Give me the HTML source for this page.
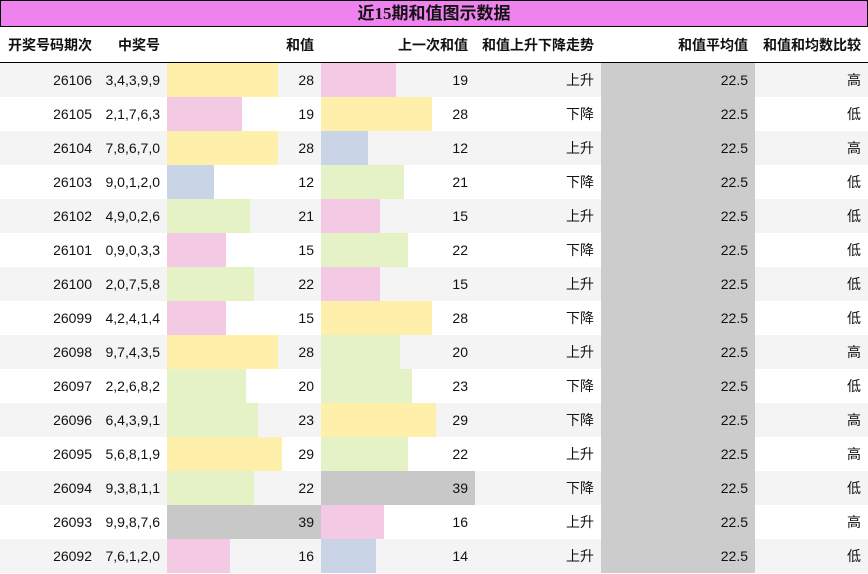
<!DOCTYPE html><html><head><meta charset="utf-8"><style>
body{margin:0;width:868px;height:574px;overflow:hidden;background:#fff;font-family:"Liberation Sans","Noto Sans CJK SC",sans-serif;font-size:14px;color:#111}
.t{height:25px;background:#ee82ee;border:1px solid #000;text-align:center;font:bold 17px/25px "Liberation Serif","Noto Sans CJK SC",serif}
.r{display:flex;height:34px;line-height:34px}
.h{font-weight:bold;height:35px;line-height:37px;border-bottom:1px solid #000}
.r>div{position:relative;text-align:right;padding-right:7px;box-sizing:border-box}
.c1{width:99px}.c2{width:68px}.c3{width:154px}.c4{width:154px}.c5{width:126px}.c6{width:154px}.c7{width:113px}
.r:nth-child(odd) {background:#f4f4f4}
.b{position:absolute;left:0;top:0;height:34px}
.r span{position:relative}
.g6{background:#ccc}
.Y{background:#fef0aa}.P{background:#f3c9e3}.G{background:#e4f2c6}.B{background:#c9d4e6}.X{background:#c8c8c8}
</style></head><body>
<div class="t">近15期和值图示数据</div>
<div class="r h" style="background:#fff"><div class="c1">开奖号码期次</div><div class="c2">中奖号</div><div class="c3">和值</div><div class="c4">上一次和值</div><div class="c5">和值上升下降走势</div><div class="c6">和值平均值</div><div class="c7">和值和均数比较</div></div>
<div id="rows">
<div class="r"><div class="c1">26106</div><div class="c2">3,4,3,9,9</div><div class="c3"><div class="b Y" style="width:111px"></div><span>28</span></div><div class="c4"><div class="b P" style="width:75px"></div><span>19</span></div><div class="c5">上升</div><div class="c6 g6">22.5</div><div class="c7">高</div></div>
<div class="r"><div class="c1">26105</div><div class="c2">2,1,7,6,3</div><div class="c3"><div class="b P" style="width:75px"></div><span>19</span></div><div class="c4"><div class="b Y" style="width:111px"></div><span>28</span></div><div class="c5">下降</div><div class="c6 g6">22.5</div><div class="c7">低</div></div>
<div class="r"><div class="c1">26104</div><div class="c2">7,8,6,7,0</div><div class="c3"><div class="b Y" style="width:111px"></div><span>28</span></div><div class="c4"><div class="b B" style="width:47px"></div><span>12</span></div><div class="c5">上升</div><div class="c6 g6">22.5</div><div class="c7">高</div></div>
<div class="r"><div class="c1">26103</div><div class="c2">9,0,1,2,0</div><div class="c3"><div class="b B" style="width:47px"></div><span>12</span></div><div class="c4"><div class="b G" style="width:83px"></div><span>21</span></div><div class="c5">下降</div><div class="c6 g6">22.5</div><div class="c7">低</div></div>
<div class="r"><div class="c1">26102</div><div class="c2">4,9,0,2,6</div><div class="c3"><div class="b G" style="width:83px"></div><span>21</span></div><div class="c4"><div class="b P" style="width:59px"></div><span>15</span></div><div class="c5">上升</div><div class="c6 g6">22.5</div><div class="c7">低</div></div>
<div class="r"><div class="c1">26101</div><div class="c2">0,9,0,3,3</div><div class="c3"><div class="b P" style="width:59px"></div><span>15</span></div><div class="c4"><div class="b G" style="width:87px"></div><span>22</span></div><div class="c5">下降</div><div class="c6 g6">22.5</div><div class="c7">低</div></div>
<div class="r"><div class="c1">26100</div><div class="c2">2,0,7,5,8</div><div class="c3"><div class="b G" style="width:87px"></div><span>22</span></div><div class="c4"><div class="b P" style="width:59px"></div><span>15</span></div><div class="c5">上升</div><div class="c6 g6">22.5</div><div class="c7">低</div></div>
<div class="r"><div class="c1">26099</div><div class="c2">4,2,4,1,4</div><div class="c3"><div class="b P" style="width:59px"></div><span>15</span></div><div class="c4"><div class="b Y" style="width:111px"></div><span>28</span></div><div class="c5">下降</div><div class="c6 g6">22.5</div><div class="c7">低</div></div>
<div class="r"><div class="c1">26098</div><div class="c2">9,7,4,3,5</div><div class="c3"><div class="b Y" style="width:111px"></div><span>28</span></div><div class="c4"><div class="b G" style="width:79px"></div><span>20</span></div><div class="c5">上升</div><div class="c6 g6">22.5</div><div class="c7">高</div></div>
<div class="r"><div class="c1">26097</div><div class="c2">2,2,6,8,2</div><div class="c3"><div class="b G" style="width:79px"></div><span>20</span></div><div class="c4"><div class="b G" style="width:91px"></div><span>23</span></div><div class="c5">下降</div><div class="c6 g6">22.5</div><div class="c7">低</div></div>
<div class="r"><div class="c1">26096</div><div class="c2">6,4,3,9,1</div><div class="c3"><div class="b G" style="width:91px"></div><span>23</span></div><div class="c4"><div class="b Y" style="width:115px"></div><span>29</span></div><div class="c5">下降</div><div class="c6 g6">22.5</div><div class="c7">高</div></div>
<div class="r"><div class="c1">26095</div><div class="c2">5,6,8,1,9</div><div class="c3"><div class="b Y" style="width:115px"></div><span>29</span></div><div class="c4"><div class="b G" style="width:87px"></div><span>22</span></div><div class="c5">上升</div><div class="c6 g6">22.5</div><div class="c7">高</div></div>
<div class="r"><div class="c1">26094</div><div class="c2">9,3,8,1,1</div><div class="c3"><div class="b G" style="width:87px"></div><span>22</span></div><div class="c4"><div class="b X" style="width:154px"></div><span>39</span></div><div class="c5">下降</div><div class="c6 g6">22.5</div><div class="c7">低</div></div>
<div class="r"><div class="c1">26093</div><div class="c2">9,9,8,7,6</div><div class="c3"><div class="b X" style="width:154px"></div><span>39</span></div><div class="c4"><div class="b P" style="width:63px"></div><span>16</span></div><div class="c5">上升</div><div class="c6 g6">22.5</div><div class="c7">高</div></div>
<div class="r"><div class="c1">26092</div><div class="c2">7,6,1,2,0</div><div class="c3"><div class="b P" style="width:63px"></div><span>16</span></div><div class="c4"><div class="b B" style="width:55px"></div><span>14</span></div><div class="c5">上升</div><div class="c6 g6">22.5</div><div class="c7">低</div></div>
</div>
</body></html>
